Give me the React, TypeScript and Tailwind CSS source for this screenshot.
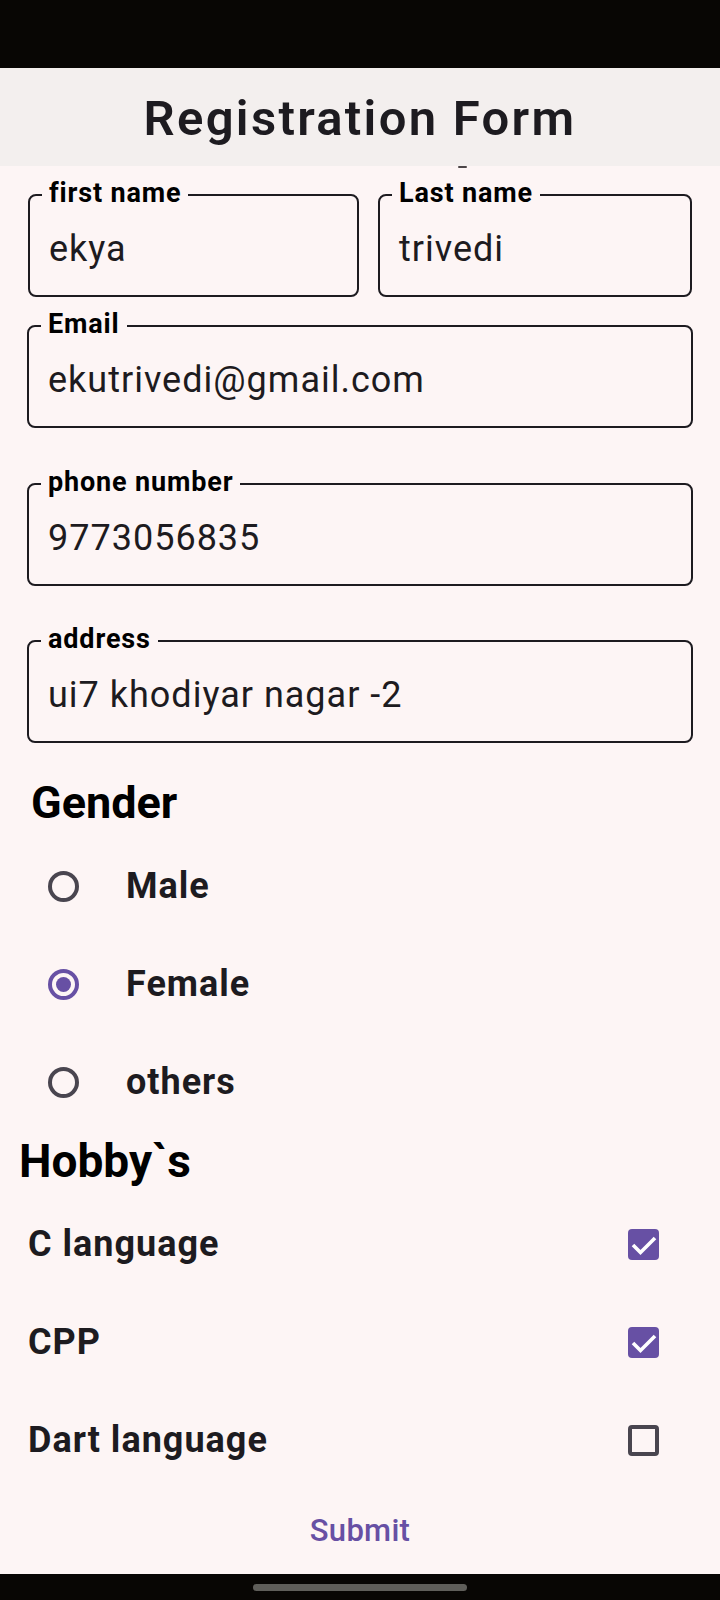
import { useState } from "react";

type FieldProps = {
  label: string;
  value: string;
  className?: string;
};

function OutlinedField({ label, value, className = "" }: FieldProps) {
  return (
    <div
      className={`relative h-[103px] rounded-[8px] border-2 border-[#1d1b20] pl-[19px] pt-[35px] ${className}`}
    >
      <span className="absolute -top-[16px] left-[12px] bg-[#fdf5f5] px-[7px] text-[27px] leading-[27px] font-bold tracking-[0.85px] text-black">
        {label}
      </span>
      <div className="text-[36px] leading-[36px] tracking-[1px] text-[#1d1b20]">{value}</div>
    </div>
  );
}

function Radio({ selected }: { selected: boolean }) {
  return (
    <span
      className={`flex h-[31px] w-[31px] items-center justify-center rounded-full border-4 ${
        selected ? "border-[#6750a4]" : "border-[#49454f]"
      }`}
    >
      {selected ? <span className="h-[15px] w-[15px] rounded-full bg-[#6750a4]" /> : null}
    </span>
  );
}

function Checkbox({ checked }: { checked: boolean }) {
  if (!checked) {
    return <span className="block h-[31px] w-[31px] rounded-[4px] border-4 border-[#49454f]" />;
  }
  return (
    <span className="block h-[31px] w-[31px] rounded-[4px] bg-[#6750a4]">
      <svg viewBox="0 0 31 31" className="h-[31px] w-[31px]">
        <path d="M5 16 L12.5 23.5 L27 9" fill="none" stroke="white" strokeWidth="3.6" />
      </svg>
    </span>
  );
}

export default function App() {
  const [gender, setGender] = useState("Female");
  const [hobbies, setHobbies] = useState<Record<string, boolean>>({
    "C language": true,
    CPP: true,
    "Dart language": false,
  });

  return (
    <div className="flex h-[1600px] w-[720px] flex-col bg-[#fdf5f5] font-['Roboto',sans-serif]">
      <div className="h-[68px] bg-[#080604]" />

      <header className="flex h-[98px] items-center justify-center bg-[#f3efee] pt-[2px]">
        <h1 className="text-[49px] leading-[49px] font-semibold tracking-[2.3px] text-[#1d1b20]">
          Registration Form
        </h1>
      </header>

      <main className="relative flex-1 px-[27px] pt-[28px]">
        <span className="absolute left-[458px] top-0 h-[2px] w-[9px] rounded-full bg-[#4b4547]" />

        <div className="flex gap-[19px] px-[1px]">
          <OutlinedField label="first name" value="ekya" className="w-[331px]" />
          <OutlinedField label="Last name" value="trivedi" className="flex-1" />
        </div>
        <OutlinedField label="Email" value="ekutrivedi@gmail.com" className="mt-[28px]" />
        <OutlinedField label="phone number" value="9773056835" className="mt-[55px]" />
        <OutlinedField label="address" value="ui7 khodiyar nagar -2" className="mt-[54px]" />

        <h2 className="mt-[37px] pl-[4px] text-[45px] leading-[45px] font-bold text-black">Gender</h2>
        <div className="mt-[12px]">
          {["Male", "Female", "others"].map((g) => (
            <button
              key={g}
              type="button"
              onClick={() => setGender(g)}
              className="flex h-[98px] w-full items-center pl-[21px]"
            >
              <Radio selected={gender === g} />
              <span className="ml-[47px] text-[36px] leading-[36px] font-bold tracking-[1px] text-[#1d1b20]">
                {g}
              </span>
            </button>
          ))}
        </div>

        <h2 className="-ml-[8px] mt-[7px] text-[46px] leading-[46px] font-bold text-black">Hobby`s</h2>
        <div className="mt-[11px]">
          {Object.keys(hobbies).map((h) => (
            <button
              key={h}
              type="button"
              onClick={() => setHobbies((prev) => ({ ...prev, [h]: !prev[h] }))}
              className="flex h-[98px] w-full items-center justify-between pl-[1px] pr-[34px]"
            >
              <span className="text-[36px] leading-[36px] font-bold tracking-[1px] text-[#1d1b20]">{h}</span>
              <Checkbox checked={hobbies[h]} />
            </button>
          ))}
        </div>

        <div className="mt-[26px] flex justify-center">
          <button type="button" className="text-[31px] leading-[31px] font-medium tracking-[0.3px] text-[#6750a4]">
            Submit
          </button>
        </div>
      </main>

      <div className="h-[26px] bg-[#080604] pt-[10px]">
        <div className="mx-auto h-[7px] w-[214px] rounded-full bg-[#5f5e5a]" />
      </div>
    </div>
  );
}
